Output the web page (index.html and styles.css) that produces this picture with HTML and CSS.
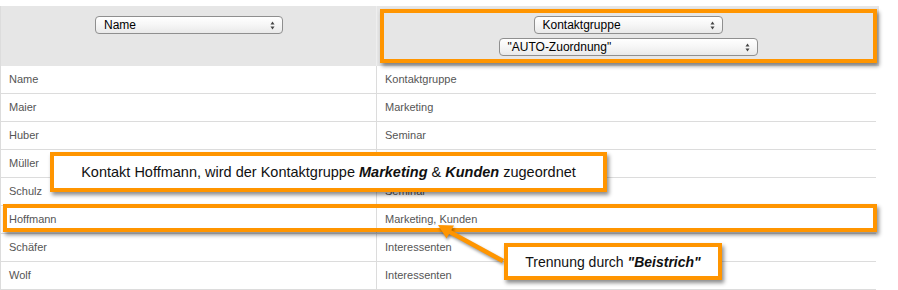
FILE: index.html
```html
<!DOCTYPE html>
<html lang="de">
<head>
<meta charset="utf-8">
<title>Kontaktgruppe Zuordnung</title>
<link rel="stylesheet" href="styles.css">
</head>
<body>
<div class="page">
  <div class="grid">
    <div class="cell head left">
      <div class="popup w-name"><span>Name</span><svg class="updown" width="5" height="9" viewBox="0 0 5 9"><polygon points="2.5,0.5 4.5,3.5 0.5,3.5"/><polygon points="0.5,5.5 4.5,5.5 2.5,8.5"/></svg></div>
    </div>
    <div class="cell head right">
      <div class="popup w-group"><span>Kontaktgruppe</span><svg class="updown" width="5" height="9" viewBox="0 0 5 9"><polygon points="2.5,0.5 4.5,3.5 0.5,3.5"/><polygon points="0.5,5.5 4.5,5.5 2.5,8.5"/></svg></div>
      <div class="popup w-auto"><span>"AUTO-Zuordnung"</span><svg class="updown" width="5" height="9" viewBox="0 0 5 9"><polygon points="2.5,0.5 4.5,3.5 0.5,3.5"/><polygon points="0.5,5.5 4.5,5.5 2.5,8.5"/></svg></div>
    </div>

    <div class="cell left">Name</div><div class="cell right">Kontaktgruppe</div>
    <div class="cell left">Maier</div><div class="cell right">Marketing</div>
    <div class="cell left">Huber</div><div class="cell right">Seminar</div>
    <div class="cell left">Müller</div><div class="cell right"></div>
    <div class="cell left">Schulz</div><div class="cell right">Seminar</div>
    <div class="cell left">Hoffmann</div><div class="cell right">Marketing, Kunden</div>
    <div class="cell left">Schäfer</div><div class="cell right">Interessenten</div>
    <div class="cell left">Wolf</div><div class="cell right">Interessenten</div>
  </div>

  <div class="frame frame-head"></div>
  <div class="frame frame-row"></div>
  <div class="callout callout-main"><span>Kontakt Hoffmann, wird der Kontaktgruppe <b><i>Marketing</i></b> &amp; <b><i>Kunden</i></b> zugeordnet</span></div>
  <svg class="arrow" width="898" height="290" viewBox="0 0 898 290">
    <line x1="503" y1="261" x2="449" y2="231.5" />
    <polygon points="438,225 454,225.5 446.5,238.5" />
  </svg>
  <div class="callout callout-sep"><span>Trennung durch <b><i>"Beistrich"</i></b></span></div>
</div>
</body>
</html>
```
FILE: styles.css
```css
html, body {
  margin: 0;
  padding: 0;
  background: #fff;
}
.page {
  position: relative;
  width: 898px;
  height: 290px;
  padding-top: 6px;
  box-sizing: border-box;
  overflow: hidden;
  font-family: "Liberation Sans", Arial, sans-serif;
}
.grid {
  display: grid;
  grid-template-columns: 377px 499px;
  grid-template-rows: 60px;
  grid-auto-rows: 28px;
}
.cell {
  box-sizing: border-box;
  border-bottom: 1px solid #dcdcdc;
  font-size: 11px;
  color: #555;
  line-height: 27px;
  padding-left: 8px;
  white-space: nowrap;
}
.cell.left {
  border-left: 1px solid #dcdcdc;
  border-right: 1px solid #dcdcdc;
}
.cell.head {
  background: #e6e6e6;
  border-bottom: none;
  padding: 10px 0 0 0;
  display: flex;
  flex-direction: column;
  align-items: center;
  gap: 4px;
}
.cell.head.left {
  border-right: 1px solid #eeeeee;
}
.cell.head.right {
  margin-right: -3px;
}
.popup {
  box-sizing: border-box;
  height: 18px;
  border: 1px solid #8f8f8f;
  border-radius: 4px;
  background: linear-gradient(#ffffff 0%, #f6f6f6 50%, #e9e9e9 100%);
  display: flex;
  align-items: center;
  justify-content: space-between;
  padding: 0 7px 0 8px;
  font-size: 12px;
  color: #000;
  line-height: 16px;
}
.popup .updown {
  fill: #444;
}
.w-name { width: 188px; margin-left: 1px; }
.w-group { width: 189px; }
.w-auto { width: 259px; }

.frame {
  position: absolute;
  box-sizing: border-box;
  border: 4px solid #ff9500;
  box-shadow: 2px 3px 4px rgba(0,0,0,0.45);
}
.frame-head {
  left: 380px;
  top: 9px;
  width: 497px;
  height: 54px;
}
.frame-row {
  left: 3px;
  top: 204px;
  width: 874px;
  height: 28px;
}
.callout {
  position: absolute;
  box-sizing: border-box;
  border: 4px solid #ff9500;
  background: #fff;
  box-shadow: 2px 3px 4px rgba(0,0,0,0.45);
  display: flex;
  align-items: center;
  justify-content: center;
  font-size: 14px;
  color: #111;
  white-space: nowrap;
}
.callout-main {
  left: 50px;
  top: 152px;
  width: 557px;
  height: 40px;
  font-size: 14.5px;
}
.callout-sep {
  left: 504px;
  top: 243px;
  width: 218px;
  height: 37px;
}
.arrow {
  position: absolute;
  left: 0;
  top: 0;
  filter: drop-shadow(1px 2px 1.5px rgba(0,0,0,0.4));
}
.arrow line {
  stroke: #ff9500;
  stroke-width: 4.5;
}
.arrow polygon {
  fill: #ff9500;
}
```
